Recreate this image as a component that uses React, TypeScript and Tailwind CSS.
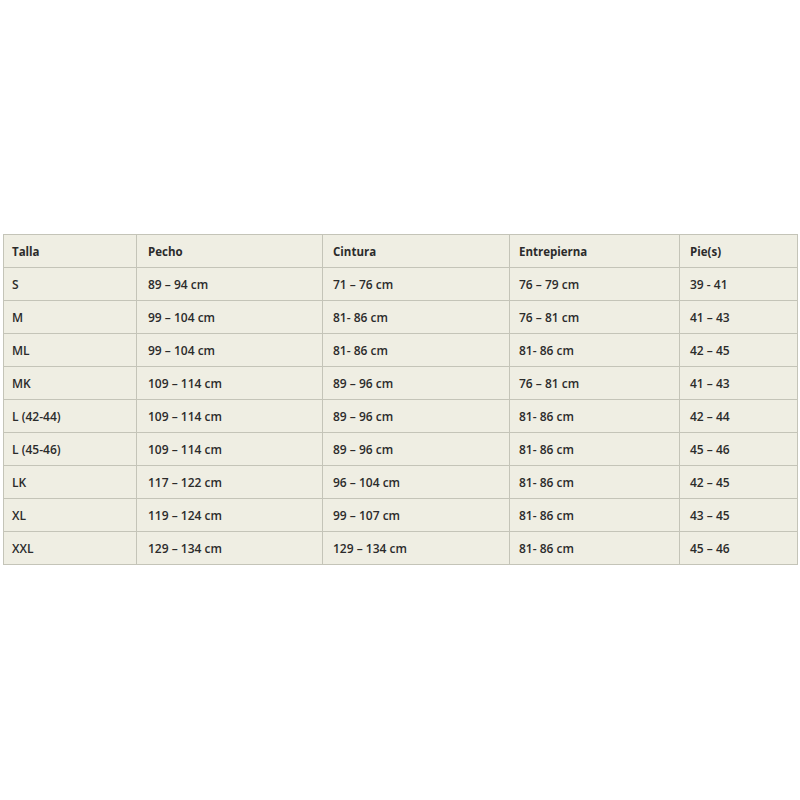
import React from "react";

const rows: string[][] = [
  ["S", "89 – 94 cm", "71 – 76 cm", "76 – 79 cm", "39 - 41"],
  ["M", "99 – 104 cm", "81- 86 cm", "76 – 81 cm", "41 – 43"],
  ["ML", "99 – 104 cm", "81- 86 cm", "81- 86 cm", "42 – 45"],
  ["MK", "109 – 114 cm", "89 – 96 cm", "76 – 81 cm", "41 – 43"],
  ["L (42-44)", "109 – 114 cm", "89 – 96 cm", "81- 86 cm", "42 – 44"],
  ["L (45-46)", "109 – 114 cm", "89 – 96 cm", "81- 86 cm", "45 – 46"],
  ["LK", "117 – 122 cm", "96 – 104 cm", "81- 86 cm", "42 – 45"],
  ["XL", "119 – 124 cm", "99 – 107 cm", "81- 86 cm", "43 – 45"],
  ["XXL", "129 – 134 cm", "129 – 134 cm", "81- 86 cm", "45 – 46"],
];

const header = ["Talla", "Pecho", "Cintura", "Entrepierna", "Pie(s)"];
const pads = ["pl-[8px]", "pl-[11px]", "pl-[10px]", "pl-[9px]", "pl-[10px]"];

export default function App() {
  return (
    <div className="w-[800px] h-[800px] bg-white pt-[234px] pl-[3px]" style={{ fontFamily: '"Open Sans", "DejaVu Sans", sans-serif' }}>
      <div className="grid grid-cols-[133px_186px_187px_170px_118px] w-[795px] border-l border-t border-[#c4c4b8] bg-[#efeee3] text-[#2b2b2b]">
        {header.map((h, i) => (
          <div key={"h" + i} className={`h-[33px] flex items-center pt-[2px] border-r border-b border-[#c4c4b8] font-bold text-[11.5px] ${pads[i]}`}>
            {h}
          </div>
        ))}
        {rows.map((r, ri) =>
          r.map((c, ci) => (
            <div key={ri + "-" + ci} className={`h-[33px] flex items-center pt-[2px] border-r border-b border-[#c4c4b8] font-semibold text-[12px] ${pads[ci]}`}>
              {c}
            </div>
          ))
        )}
      </div>
    </div>
  );
}
